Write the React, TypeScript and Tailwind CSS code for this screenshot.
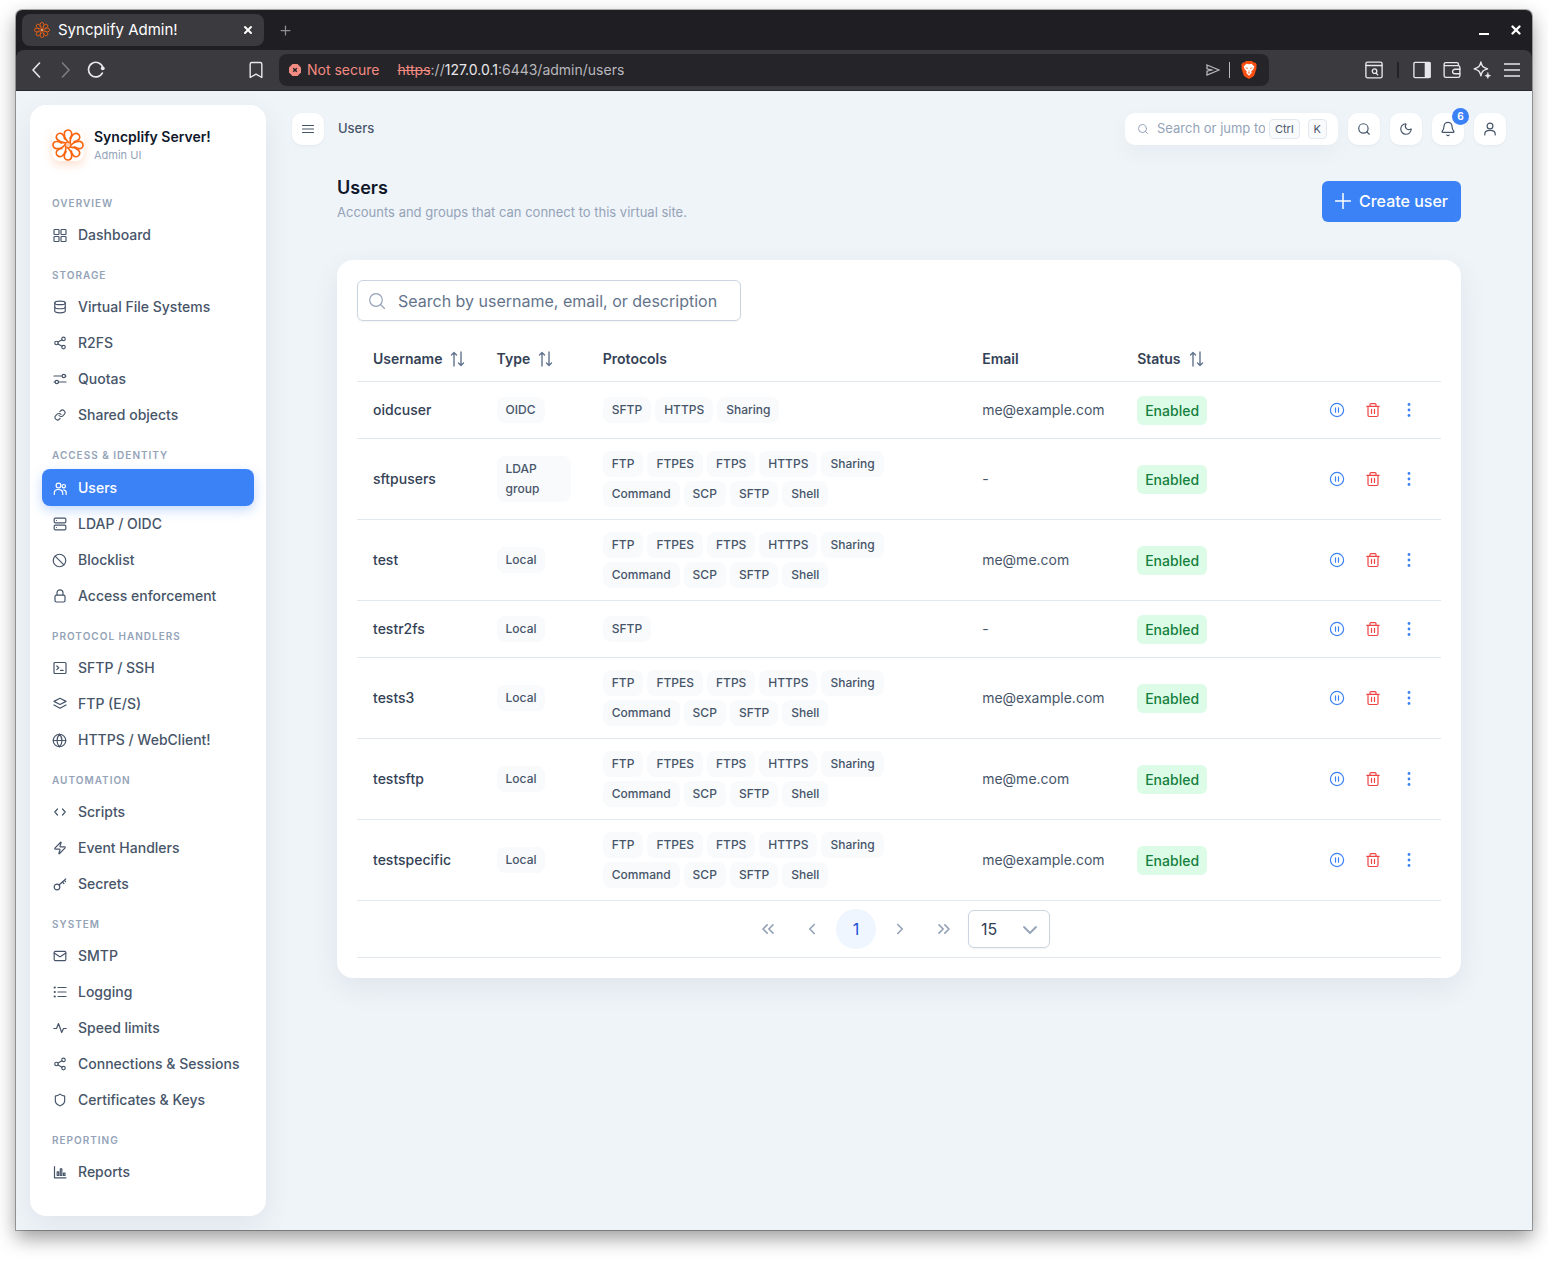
import type { ReactNode } from "react";
import {
  Ban,
  Bell,
  Bookmark,
  ChevronDown,
  ChevronLeft,
  ChevronRight,
  ChevronsLeft,
  ChevronsRight,
  Database,
  Globe,
  Link,
  Mail,
  Moon,
  Plus,
  Search,
  Server,
  Share2,
  Shield,
  X,
  Zap,
} from "lucide-react";

const Glyph = ({ children, className = "size-4" }: { children: ReactNode; className?: string }) => (
  <svg
    viewBox="0 0 16 16"
    fill="none"
    stroke="currentColor"
    strokeWidth="1.2"
    strokeLinecap="round"
    strokeLinejoin="round"
    className={className}
    aria-hidden="true"
  >
    {children}
  </svg>
);

const petals = [0, 45, 90, 135, 180, 225, 270, 315];

const Logo = ({ className }: { className: string }) => (
  <svg viewBox="0 0 32 32" fill="none" stroke="#f9640f" strokeWidth="1.7" strokeLinecap="round" className={className} aria-hidden="true">
    {petals.map((angle) => (
      <path
        key={angle}
        transform={`rotate(${angle} 16 16)`}
        d="M16.8 13.6C13.6 11 12.2 8 12.3 4.800a3.700 3.700 0 0 1 7.400-.2c.1 1.900-.6 3.500-1.700 4.700"
      />
    ))}
    <circle cx="16" cy="16" r="1.8" fill="#fdc9a8" stroke="none" />
  </svg>
);

const BraveLion = () => (
  <svg viewBox="0 0 16 18" className="h-[18px] w-4" aria-hidden="true">
    <path d="M5 0h6l1.4 1.4h1.8L15.8 4l-.6 1.6.4 1.2-2.2 7.2c-.2.7-.6 1.1-1.2 1.5L8 18l-4.2-2.5c-.6-.4-1-.8-1.2-1.5L.4 6.800l.4-1.200L.2 4l1.600-2.600h1.800z" fill="#fb5012" />
    <path
      d="M8 3.200l2.600-.5 2.700 2.700-.8 2.500-2.300 2.700.5 1.400-2.700 2.800-2.700-2.800.5-1.400-2.300-2.700-.8-2.500 2.700-2.700z"
      fill="#fff"
    />
    <path d="M4 6.200l3 .7-.6 1zM12 6.200l-3 .7.6 1zM7 9.800h2l-1 .9zM6.200 12l1.800-.8 1.800.8-1.800.5z" fill="#fb5012" />
  </svg>
);

const DashboardIcon = () => (
  <Glyph>
    <rect x="2" y="2.500" width="5" height="5" rx=".8" />
    <rect x="9" y="2.500" width="5" height="5" rx=".8" />
    <rect x="2" y="9.500" width="5" height="5" rx=".8" />
    <rect x="9" y="9.500" width="5" height="5" rx=".8" />
  </Glyph>
);

const UsersIcon = () => (
  <Glyph>
    <circle cx="6.500" cy="5.500" r="2.400" />
    <path d="M2.300 14.500V13c0-2 1.700-3.500 4.200-3.500s4.200 1.500 4.200 3.500v1.500" />
    <circle cx="11.800" cy="6.200" r="1.700" />
    <path d="M11.700 9.800c1.600.2 2.500 1.500 2.500 3.200v1.500" />
  </Glyph>
);

const QuotasIcon = () => (
  <Glyph>
    <circle cx="11.800" cy="5" r="1.700" />
    <circle cx="4.800" cy="11" r="1.700" />
    <path d="M2 5h8M6.500 11H14M13.500 5h.5M2 11h1" />
  </Glyph>
);

const LockIcon = () => (
  <Glyph>
    <rect x="3" y="7.200" width="10" height="6.800" rx="1.400" />
    <path d="M5 7V4.800a3 3 0 0 1 6 0V7" />
  </Glyph>
);

const TerminalIcon = () => (
  <Glyph>
    <rect x="2" y="2.500" width="12" height="11" rx="1" />
    <path d="M4.800 6l2 1.800-2 1.800M8.500 10.300h2.700" />
  </Glyph>
);

const LayersIcon = () => (
  <Glyph>
    <path d="M8 2.300l6 3.100-6 3.100-6-3.100zM2 9l6 3.300L14 9" />
  </Glyph>
);

const CodeIcon = () => (
  <Glyph>
    <path d="M5.500 5L2.800 8l2.700 3M10.500 5l2.700 3-2.700 3" />
  </Glyph>
);

const KeyIcon = () => (
  <Glyph>
    <circle cx="5" cy="11" r="2.800" />
    <path d="M7 9l6.700-6M10.400 6l1.500 1.500M12.300 4.300l1.300 1.300" />
  </Glyph>
);

const LoggingIcon = () => (
  <Glyph>
    <path d="M6 3.500h8M6 8h8M6 12.500h8" />
    <path d="M2.700 3.500h.1M2.700 8h.1M2.700 12.500h.1" strokeWidth="2.200" />
  </Glyph>
);

const SpeedIcon = () => (
  <Glyph>
    <path d="M1.800 8.500h2.700l2-5 3.200 9 1.800-4h2.700" />
  </Glyph>
);

const ReportsIcon = () => (
  <Glyph>
    <path d="M2.500 2.500v11.300H14" />
    <path d="M5.200 11.500V7.800h1.500v3.700zM8.300 11.500V4.800h1.500v6.700zM11.500 11.500V9H13v2.500z" />
  </Glyph>
);

const PauseCircle = () => (
  <Glyph>
    <circle cx="8" cy="8" r="6.600" />
    <path d="M6.500 5.800v4.400M9.500 5.800v4.400" />
  </Glyph>
);

const Trash = () => (
  <Glyph>
    <path d="M1.800 4.300h12.400M3 4.300v9c0 .7.500 1.200 1.200 1.200h7.600c.7 0 1.200-.5 1.200-1.200v-9M5 4.100V2.600c0-.6.400-1 1-1h4c.6 0 1 .4 1 1v1.500M6.500 7.300v4.200M9.500 7.300v4.200" />
  </Glyph>
);

const Dots = () => (
  <svg viewBox="0 0 16 16" fill="currentColor" className="size-4" aria-hidden="true">
    <circle cx="8" cy="2.500" r="1.400" />
    <circle cx="8" cy="8" r="1.400" />
    <circle cx="8" cy="13.500" r="1.400" />
  </svg>
);

const SortIcon = () => (
  <span className="flex text-slate-500" aria-hidden="true">
    <Glyph>
      <path d="M4 15V1.500M1.500 4L4 1.500 6.500 4M11 1v13.500M8.500 12l2.500 2.500 2.500-2.500" strokeWidth="1.400" />
    </Glyph>
  </span>
);

const line = { size: 16, strokeWidth: 1.8, "aria-hidden": true } as const;
const small = { size: 14, strokeWidth: 2, className: "mx-px", "aria-hidden": true } as const;

const navigation = [
  { title: "Overview", items: [{ label: "Dashboard", icon: <DashboardIcon /> }] },
  {
    title: "Storage",
    items: [
      { label: "Virtual File Systems", icon: <Database {...small} /> },
      { label: "R2FS", icon: <Share2 {...small} /> },
      { label: "Quotas", icon: <QuotasIcon /> },
      { label: "Shared objects", icon: <Link size={12} strokeWidth={2.2} className="mx-0.5" aria-hidden /> },
    ],
  },
  {
    title: "Access & Identity",
    items: [
      { label: "Users", icon: <UsersIcon />, active: true },
      { label: "LDAP / OIDC", icon: <Server {...small} /> },
      { label: "Blocklist", icon: <Ban size={15} strokeWidth={1.9} className="mr-px" aria-hidden /> },
      { label: "Access enforcement", icon: <LockIcon /> },
    ],
  },
  {
    title: "Protocol handlers",
    items: [
      { label: "SFTP / SSH", icon: <TerminalIcon /> },
      { label: "FTP (E/S)", icon: <LayersIcon /> },
      { label: "HTTPS / WebClient!", icon: <Globe size={15} strokeWidth={1.9} className="mr-px" aria-hidden /> },
    ],
  },
  {
    title: "Automation",
    items: [
      { label: "Scripts", icon: <CodeIcon /> },
      { label: "Event Handlers", icon: <Zap {...small} /> },
      { label: "Secrets", icon: <KeyIcon /> },
    ],
  },
  {
    title: "System",
    items: [
      { label: "SMTP", icon: <Mail {...small} /> },
      { label: "Logging", icon: <LoggingIcon /> },
      { label: "Speed limits", icon: <SpeedIcon /> },
      { label: "Connections & Sessions", icon: <Share2 {...small} /> },
      { label: "Certificates & Keys", icon: <Shield {...small} /> },
    ],
  },
  { title: "Reporting", items: [{ label: "Reports", icon: <ReportsIcon /> }] },
];

const all = ["FTP", "FTPES", "FTPS", "HTTPS", "Sharing", "Command", "SCP", "SFTP", "Shell"];

const users = [
  { name: "oidcuser", type: "OIDC", protocols: ["SFTP", "HTTPS", "Sharing"], email: "me@example.com" },
  { name: "sftpusers", type: "LDAP group", protocols: all, email: "-" },
  { name: "test", type: "Local", protocols: all, email: "me@me.com" },
  { name: "testr2fs", type: "Local", protocols: ["SFTP"], email: "-" },
  { name: "tests3", type: "Local", protocols: all, email: "me@example.com" },
  { name: "testsftp", type: "Local", protocols: all, email: "me@me.com" },
  { name: "testspecific", type: "Local", protocols: all, email: "me@example.com" },
];

const ToolButton = ({ label, children }: { label: string; children: ReactNode }) => (
  <button type="button" aria-label={label} className="flex h-8 w-[30px] items-center justify-center">
    {children}
  </button>
);

const BrowserBar = () => (
  <header className="bg-[#1f1e23]">
    {/* Tab strip */}
    <div className="flex h-10 items-center pl-1.5 pr-2">
      <div className="flex h-8 w-[242px] items-center rounded-lg bg-[#3b3a3f] pl-3 pr-2 text-white">
        <Logo className="size-4" />
        <span className="ml-2 flex-1 text-[15px]">Syncplify Admin!</span>
        <button type="button" aria-label="Close tab" className="flex size-4 items-center justify-center">
          <X size={12} strokeWidth={4} />
        </button>
      </div>
      <button type="button" aria-label="New tab" className="ml-3 flex size-[18px] items-center justify-center text-[#8f8e92]">
        <Plus size={15} strokeWidth={2} />
      </button>
      <div className="ml-auto flex text-white">
        <button type="button" aria-label="Minimize" className="flex h-8 w-8 items-center justify-center">
          <svg viewBox="0 0 10 12" className="h-3 w-2.5" aria-hidden="true">
            <path d="M0 10h10" stroke="currentColor" strokeWidth="2" />
          </svg>
        </button>
        <button type="button" aria-label="Close" className="-mr-2 flex h-8 w-8 items-center justify-center">
          <X size={14} strokeWidth={4} />
        </button>
      </div>
    </div>

    {/* Address bar */}
    <div className="flex h-[41px] items-center rounded-t-lg border-b border-[#2a292e] bg-[#3b3a3f] px-[5px] text-[#e8e7ea]">
      <ToolButton label="Back">
        <Glyph className="size-4">
          <path d="M11.500 1L5 8l6.500 7" strokeWidth="1.600" />
        </Glyph>
      </ToolButton>
      <span className="text-[#7d7c81]">
        <ToolButton label="Forward">
          <Glyph className="size-4">
            <path d="M4.500 1L11 8l-6.500 7" strokeWidth="1.600" />
          </Glyph>
        </ToolButton>
      </span>
      <ToolButton label="Reload">
        <Glyph className="size-[18px]">
          <path d="M13.600 10.700a6.500 6.500 0 1 1 .6-4.500" strokeWidth="1.500" />
          <circle cx="14" cy="6.500" r="1.700" fill="currentColor" stroke="none" />
        </Glyph>
      </ToolButton>
      <div className="ml-[130px]">
        <ToolButton label="Bookmark">
          <Bookmark size={20} strokeWidth={1.7} />
        </ToolButton>
      </div>
      <div className="ml-2 mr-[90px] flex h-8 flex-1 items-center rounded-lg bg-[#252429] pl-2.5 pr-3 text-sm">
        <svg viewBox="0 0 12 12" className="size-3" aria-hidden="true">
          <path d="M3.500 0h5L12 3.500v5L8.500 12h-5L0 8.500v-5z" fill="#f28b82" />
          <path d="M4.200 4.200l3.600 3.600M7.800 4.200L4.200 7.800" stroke="#252429" strokeWidth="1.400" />
        </svg>
        <span className="ml-1.5 text-[#f28b82]">Not secure</span>
        <span className="ml-[18px] flex-1 text-[#b9b8bd]">
          <span className="text-[#f28b82] line-through">https</span>://<span className="text-[#e8e7ea]">127.0.0.1</span>
          :6443/admin/users
        </span>
        <svg viewBox="0 0 14 12" className="h-3 w-3.5 text-[#b9b8bd]" fill="none" stroke="currentColor" strokeWidth="1.300" aria-hidden="true">
          <path d="M1 1l12 5-12 5V7.200L5.500 6 1 4.800z" />
        </svg>
        <span className="ml-[9px] mr-[11px] h-4 w-px bg-[#b9b8bd]" />
        <BraveLion />
      </div>
      <ToolButton label="Search tabs">
        <Glyph className="size-[18px]">
          <rect x=".8" y="1" width="14.400" height="14" rx="1.500" />
          <path d="M1 4h14M10 11l1.300 1.300" />
          <circle cx="8.500" cy="9" r="2" />
        </Glyph>
      </ToolButton>
      <span className="mx-2 h-4 w-0.5 bg-[#232227]" />
      <ToolButton label="Side panel">
        <Glyph className="size-[18px]">
          <rect x=".8" y="1.200" width="14.400" height="13.600" rx="1" />
          <path d="M11 1.500h4v13h-4z" fill="currentColor" />
        </Glyph>
      </ToolButton>
      <ToolButton label="Wallet">
        <Glyph className="size-[18px]">
          <path d="M1 3.500V13c0 1 .6 1.600 1.600 1.600h10.800c1 0 1.600-.6 1.600-1.600V5.700c0-1-.6-1.600-1.600-1.600H2.200C.5 4.100.6 1.400 2.400 1.400h10c.8 0 1.300.5 1.300 1.300v1.200" />
          <path d="M15 7.300h-4.500a2 2 0 0 0 0 4H15" />
        </Glyph>
      </ToolButton>
      <ToolButton label="Assistant">
        <Glyph className="size-[18px]">
          <path d="M7 .8c.8 4 1.700 5 6 6.200-4.300 1.200-5.200 2.200-6 6.200-.8-4-1.700-5-6-6.200C5.300 5.800 6.200 4.800 7 .8z" />
          <path d="M13.200 10.500c.3 1.600.8 2.100 2.400 2.500-1.600.4-2.100.9-2.400 2.500-.3-1.600-.8-2.100-2.400-2.500 1.600-.4 2.100-.9 2.400-2.500z" fill="currentColor" strokeWidth=".6" />
        </Glyph>
      </ToolButton>
      <ToolButton label="Menu">
        <svg viewBox="0 0 16 14" className="h-3.5 w-4" stroke="currentColor" strokeWidth="1.700" aria-hidden="true">
          <path d="M0 1h16M0 7h16M0 13h16" />
        </svg>
      </ToolButton>
    </div>
  </header>
);

const Sidebar = () => (
  <aside className="w-[236px] shrink-0 rounded-2xl bg-white px-3 pb-[26px] pt-[22px] shadow-[0_10px_30px_rgba(15,23,42,0.07)]">
    <div className="flex items-center px-2.5 pb-[18px]">
      <div className="rounded-lg shadow-[0_4px_10px_rgba(249,100,15,0.2)]">
        <Logo className="size-8" />
      </div>
      <div className="ml-2.5">
        <p className="text-sm leading-5 font-semibold text-[#0f172a]">Syncplify Server!</p>
        <p className="text-[11px] leading-4 text-[#94a3b8]">Admin UI</p>
      </div>
    </div>
    <nav>
      {navigation.map((section) => (
        <div key={section.title}>
          <h2 className="px-2.5 pb-1.5 pt-3.5 text-[10px] leading-4 font-semibold tracking-widest text-[#94a3b8] uppercase">
            {section.title}
          </h2>
          {section.items.map((item) => (
            <a
              key={item.label}
              href="#"
              className={
                "active" in item
                  ? "flex h-[37px] items-center gap-2.5 rounded-lg bg-[#3b82f6] px-2.5 text-sm font-medium text-white shadow-[0_4px_12px_rgba(59,130,246,0.3)]"
                  : "flex h-9 items-center gap-2.5 rounded-lg px-2.5 text-sm font-medium text-[#475569]"
              }
            >
              {item.icon}
              {item.label}
            </a>
          ))}
        </div>
      ))}
    </nav>
  </aside>
);

const IconButton = ({ label, children }: { label: string; children: ReactNode }) => (
  <button
    type="button"
    aria-label={label}
    className="relative flex size-8 items-center justify-center rounded-[10px] bg-white text-[#475569] shadow-[0_1px_3px_rgba(15,23,42,0.05)]"
  >
    {children}
  </button>
);

const TopBar = () => (
  <div className="flex items-center gap-2.5">
    <IconButton label="Toggle sidebar">
      <Glyph>
        <path d="M2.500 4.500h11M2.500 8h11M2.500 11.500h11" />
      </Glyph>
    </IconButton>
    <span className="ml-1 mr-auto text-[13px] font-medium text-[#475569]">Users</span>
    <label className="flex h-8 w-[213px] items-center rounded-[10px] bg-white pl-3 pr-[11px] shadow-[0_8px_24px_rgba(15,23,42,0.04)]">
      <Search size={12} strokeWidth={2} className="shrink-0 text-[#94a3b8]" />
      <input
        type="text"
        aria-label="Search or jump to"
        placeholder="Search or jump to"
        className="ml-2 min-w-0 flex-1 text-[13px] outline-none placeholder:text-[#94a3b8]"
      />
      <kbd className="ml-1 rounded border border-slate-200 bg-slate-50 px-[5px] font-[Inter] text-[11px] leading-[18px] text-[#475569]">Ctrl</kbd>
      <kbd className="ml-2 rounded border border-slate-200 bg-slate-50 px-[5px] font-[Inter] text-[11px] leading-[18px] text-[#475569]">K</kbd>
    </label>
    <IconButton label="Search">
      <Search size={14} strokeWidth={2} />
    </IconButton>
    <IconButton label="Dark mode">
      <Moon size={14} strokeWidth={2} />
    </IconButton>
    <IconButton label="Notifications">
      <Bell size={16} strokeWidth={1.8} />
      <span className="absolute -right-[5px] -top-[5px] size-[17px] rounded-full bg-[#3b82f6] text-center text-[10px] leading-[17px] font-bold text-white">
        6
      </span>
    </IconButton>
    <IconButton label="Account">
      <Glyph>
        <circle cx="8" cy="5" r="2.900" />
        <path d="M2.800 14v-1c0-2.200 1.900-3.600 5.200-3.600s5.200 1.400 5.200 3.600v1" />
      </Glyph>
    </IconButton>
  </div>
);

const Tag = ({ children }: { children: ReactNode }) => (
  <span className="inline-block rounded-lg bg-slate-50 px-[9px] py-[3px] text-xs leading-5 font-medium text-[#475569]">{children}</span>
);

const UsersTable = () => (
  <table className="mt-4 w-full table-fixed text-left text-sm text-[#475569]">
    <thead>
      <tr className="border-b border-slate-200 text-[#334155]">
        <th className="w-[11.4%] px-4 py-3 font-semibold">
          <span className="flex items-center gap-2">Username <SortIcon /></span>
        </th>
        <th className="w-[9.8%] px-4 py-3 font-semibold">
          <span className="flex items-center gap-2">Type <SortIcon /></span>
        </th>
        <th className="w-[35%] px-4 py-3 font-semibold">Protocols</th>
        <th className="w-[14.3%] px-4 py-3 font-semibold">Email</th>
        <th className="w-[10%] px-4 py-3 font-semibold">
          <span className="flex items-center gap-2">Status <SortIcon /></span>
        </th>
        <th className="px-4 py-3" aria-label="Actions" />
      </tr>
    </thead>
    <tbody>
      {users.map((user) => (
        <tr key={user.name} className="border-b border-slate-200">
          <td className="px-4 py-3 font-medium text-[#334155]">{user.name}</td>
          <td className="px-4 py-3">
            <div className="flex">
              <Tag>{user.type}</Tag>
            </div>
          </td>
          <td className="px-4 py-3">
            <div className="flex flex-wrap gap-1">
              {user.protocols.map((protocol) => (
                <Tag key={protocol}>{protocol}</Tag>
              ))}
            </div>
          </td>
          <td className="px-4 py-3">{user.email}</td>
          <td className="px-4 py-3">
            <div className="flex">
              <span className="rounded-md bg-[#dcfce7] px-2 py-1 leading-[21px] font-medium text-[#15803d]">Enabled</span>
            </div>
          </td>
          <td className="px-4 py-3">
            <div className="flex justify-end gap-1 text-[#3b82f6]">
              <button type="button" aria-label={`Disable ${user.name}`} className="flex size-8 items-center justify-center">
                <PauseCircle />
              </button>
              <button type="button" aria-label={`Delete ${user.name}`} className="flex size-8 items-center justify-center text-[#ef4444]">
                <Trash />
              </button>
              <button type="button" aria-label={`More actions for ${user.name}`} className="flex size-8 items-center justify-center">
                <Dots />
              </button>
            </div>
          </td>
        </tr>
      ))}
    </tbody>
  </table>
);

const pageButton = "flex size-10 items-center justify-center rounded-full text-[#94a3b8]";

const Paginator = () => (
  <div className="flex items-center justify-center gap-1 border-b border-slate-200 py-2">
    <button type="button" aria-label="First page" className={pageButton}>
      <ChevronsLeft size={20} strokeWidth={2} />
    </button>
    <button type="button" aria-label="Previous page" className={pageButton}>
      <ChevronLeft size={18} strokeWidth={2.2} />
    </button>
    <button type="button" className="size-10 rounded-full bg-[#eff6ff] text-base text-[#1d4ed8]">
      1
    </button>
    <button type="button" aria-label="Next page" className={pageButton}>
      <ChevronRight size={18} strokeWidth={2.2} />
    </button>
    <button type="button" aria-label="Last page" className={pageButton}>
      <ChevronsRight size={20} strokeWidth={2} />
    </button>
    <div className="relative">
      <select
        aria-label="Rows per page"
        className="h-[38px] w-[82px] appearance-none rounded-md border border-slate-300 bg-white pl-3 text-base text-[#334155] shadow-[0_1px_2px_rgba(18,18,23,0.05)]"
      >
        <option>15</option>
      </select>
      <ChevronDown size={24} strokeWidth={1.8} className="pointer-events-none absolute right-2 top-2 text-[#94a3b8]" />
    </div>
  </div>
);

const App = () => {
  return (
    <div className="bg-white px-4 pb-8 pt-2.5 font-[Inter,sans-serif]">
      <div className="overflow-hidden rounded-t-md shadow-[0_0_0_1px_rgba(0,0,0,0.3),0_8px_20px_rgba(0,0,0,0.4)]">
        <BrowserBar />
        <div className="flex bg-[#eff4f9] py-3.5 pl-3.5">
          <Sidebar />
          <main className="min-w-0 flex-1 px-[26px] pt-2">
            <TopBar />
            <div className="px-[45px] pt-[29px]">
              <div className="flex items-center justify-between">
                <div>
                  <h1 className="text-lg leading-7 font-semibold text-[#0f172a]">Users</h1>
                  <p className="text-[13px] leading-5 text-[#94a3b8]">Accounts and groups that can connect to this virtual site.</p>
                </div>
                <button type="button" className="mt-1.5 flex h-[41px] items-center gap-2 rounded-md bg-[#3b82f6] px-[13px] font-medium text-white">
                  <Glyph>
                    <path d="M8 .5v15M.5 8h15" strokeWidth="1.500" />
                  </Glyph>
                  Create user
                </button>
              </div>

              {/* Users card */}
              <section className="mt-[38px] rounded-2xl bg-white p-5 shadow-[0_10px_30px_rgba(15,23,42,0.07)]">
                <label className="flex h-[41px] w-96 items-center rounded-md border border-slate-300 px-[11px] shadow-[0_1px_2px_rgba(18,18,23,0.05)]">
                  <Glyph className="size-4 shrink-0 text-[#94a3b8]">
                    <circle cx="7" cy="7" r="6.300" />
                    <path d="M11.600 11.600l3.900 3.900" />
                  </Glyph>
                  <input
                    type="text"
                    aria-label="Search users"
                    placeholder="Search by username, email, or description"
                    className="ml-[13px] min-w-0 flex-1 text-base outline-none placeholder:text-[#64748b]"
                  />
                </label>
                <UsersTable />
                <Paginator />
              </section>
            </div>
          </main>
        </div>
      </div>
    </div>
  );
};

export default App;
